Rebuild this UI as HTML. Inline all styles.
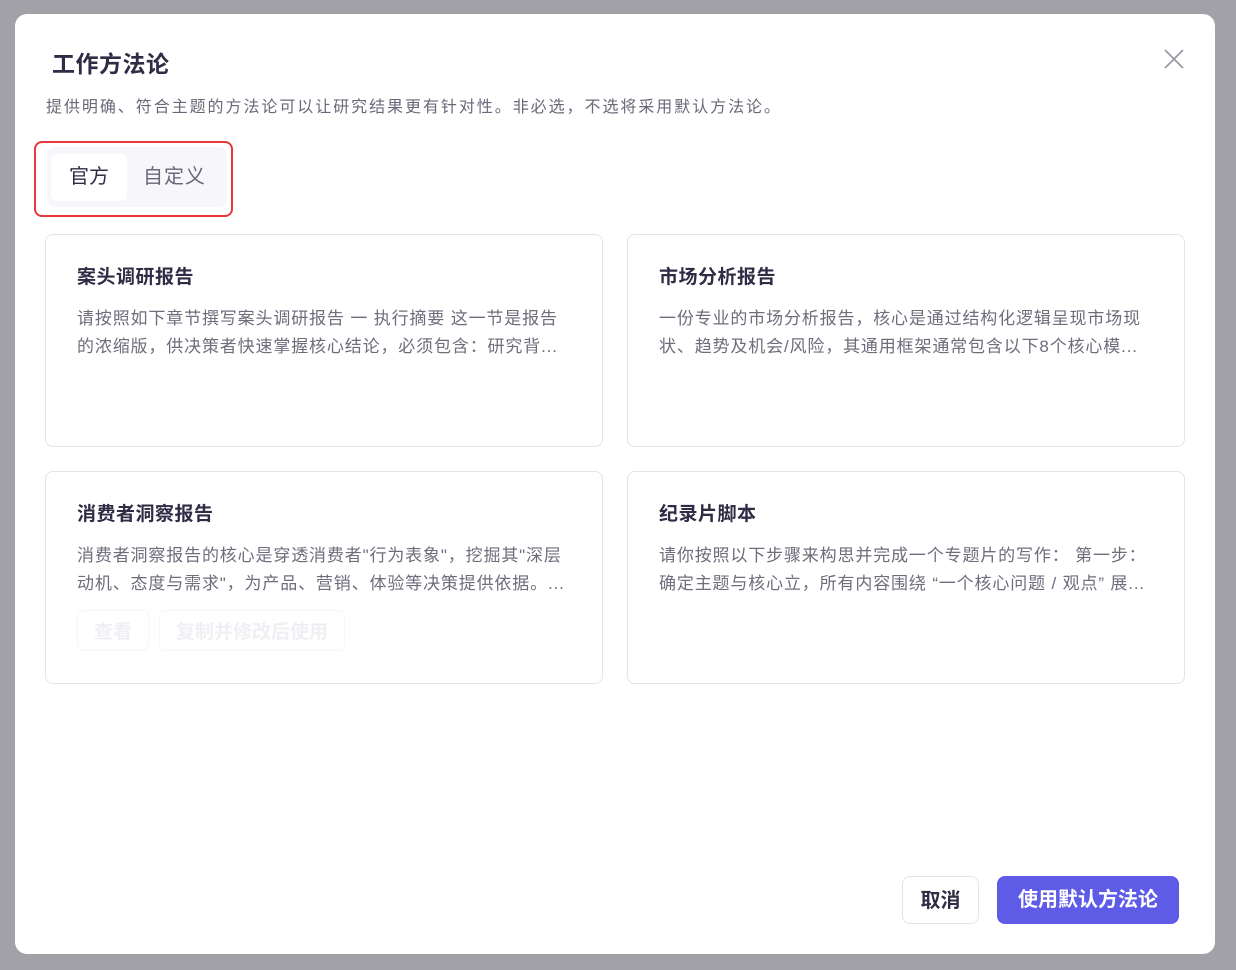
<!DOCTYPE html>
<html><head><meta charset="utf-8"><style>
*{margin:0;padding:0;box-sizing:border-box}
body{width:1236px;height:970px;background:#a2a1a8;font-family:"Liberation Sans","Noto Sans CJK SC",sans-serif;position:relative;overflow:hidden}
.m{position:absolute;left:15px;top:14px;width:1200px;height:940px;background:#fff;border-radius:12px}
.t{position:absolute;left:37px;top:31px;font-size:23px;font-weight:700;color:#2f2d45;letter-spacing:0.5px}
.s{position:absolute;left:31px;top:79px;font-size:16px;color:#6a6878;letter-spacing:1.95px;white-space:nowrap}
.x{position:absolute;left:1147px;top:33px}
.tabs{position:absolute;left:32px;top:133px;width:180px;height:60px;background:#f7f7fb;border-radius:8px}
.red{position:absolute;left:19px;top:127px;width:199px;height:76px;border:2.5px solid #e8383b;border-radius:8px}
.tab1{position:absolute;left:36px;top:140px;width:76px;height:47px;background:#fff;border-radius:6px;font-size:20px;color:#2f2d45;text-align:center;line-height:47px}
.tab2{position:absolute;left:128px;top:140px;font-size:20px;color:#6a6878;line-height:47px;letter-spacing:1px}
.c{position:absolute;width:558px;height:213px;border:1px solid #e3e3ec;border-radius:8px;padding:27px 31px}
.c h3{font-size:19px;font-weight:700;color:#2f2d45;margin-bottom:16px;letter-spacing:0.5px}
.c p{font-size:17px;line-height:28px;color:#6f6d7c;letter-spacing:0.85px;white-space:nowrap}
.btn{position:absolute;top:862px;height:48px;border-radius:8px;font-size:20px;font-weight:700;text-align:center;line-height:48px}
</style></head><body>
<div class="m">
<div class="t">工作方法论</div>
<div class="s">提供明确、符合主题的方法论可以让研究结果更有针对性。非必选，不选将采用默认方法论。</div>
<svg class="x" width="24" height="24" viewBox="0 0 24 24"><path d="M3 3L21 21M21 3L3 21" stroke="#9a98a8" stroke-width="1.8"/></svg>
<div class="tabs"></div>
<div class="tab1">官方</div>
<div class="tab2">自定义</div>
<div class="red"></div>
<div class="c" style="left:30px;top:220px"><h3>案头调研报告</h3><p>请按照如下章节撰写案头调研报告 一 执行摘要 这一节是报告<br>的浓缩版，供决策者快速掌握核心结论，必须包含：研究背...</p></div>
<div class="c" style="left:612px;top:220px"><h3>市场分析报告</h3><p>一份专业的市场分析报告，核心是通过结构化逻辑呈现市场现<br>状、趋势及机会/风险，其通用框架通常包含以下8个核心模...</p></div>
<div class="c" style="left:30px;top:457px"><h3>消费者洞察报告</h3><p>消费者洞察报告的核心是穿透消费者"行为表象"，挖掘其"深层<br>动机、态度与需求"，为产品、营销、体验等决策提供依据。...</p>
<div style="margin-top:12px;font-size:19px;font-weight:700;color:#f0f0f4;display:flex;gap:10px"><span style="border:1px solid #f6f6f9;border-radius:6px;padding:6px 16px">查看</span><span style="border:1px solid #f6f6f9;border-radius:6px;padding:6px 16px">复制并修改后使用</span></div></div>
<div class="c" style="left:612px;top:457px"><h3>纪录片脚本</h3><p>请你按照以下步骤来构思并完成一个专题片的写作： 第一步：<br>确定主题与核心立，所有内容围绕 “一个核心问题 / 观点” 展...</p></div>
<div class="btn" style="left:887px;width:77px;border:1px solid #e3e3ec;color:#2f2d45">取消</div>
<div class="btn" style="left:982px;width:182px;background:#5e5ce6;color:#fff">使用默认方法论</div>
</div>
</body></html>
